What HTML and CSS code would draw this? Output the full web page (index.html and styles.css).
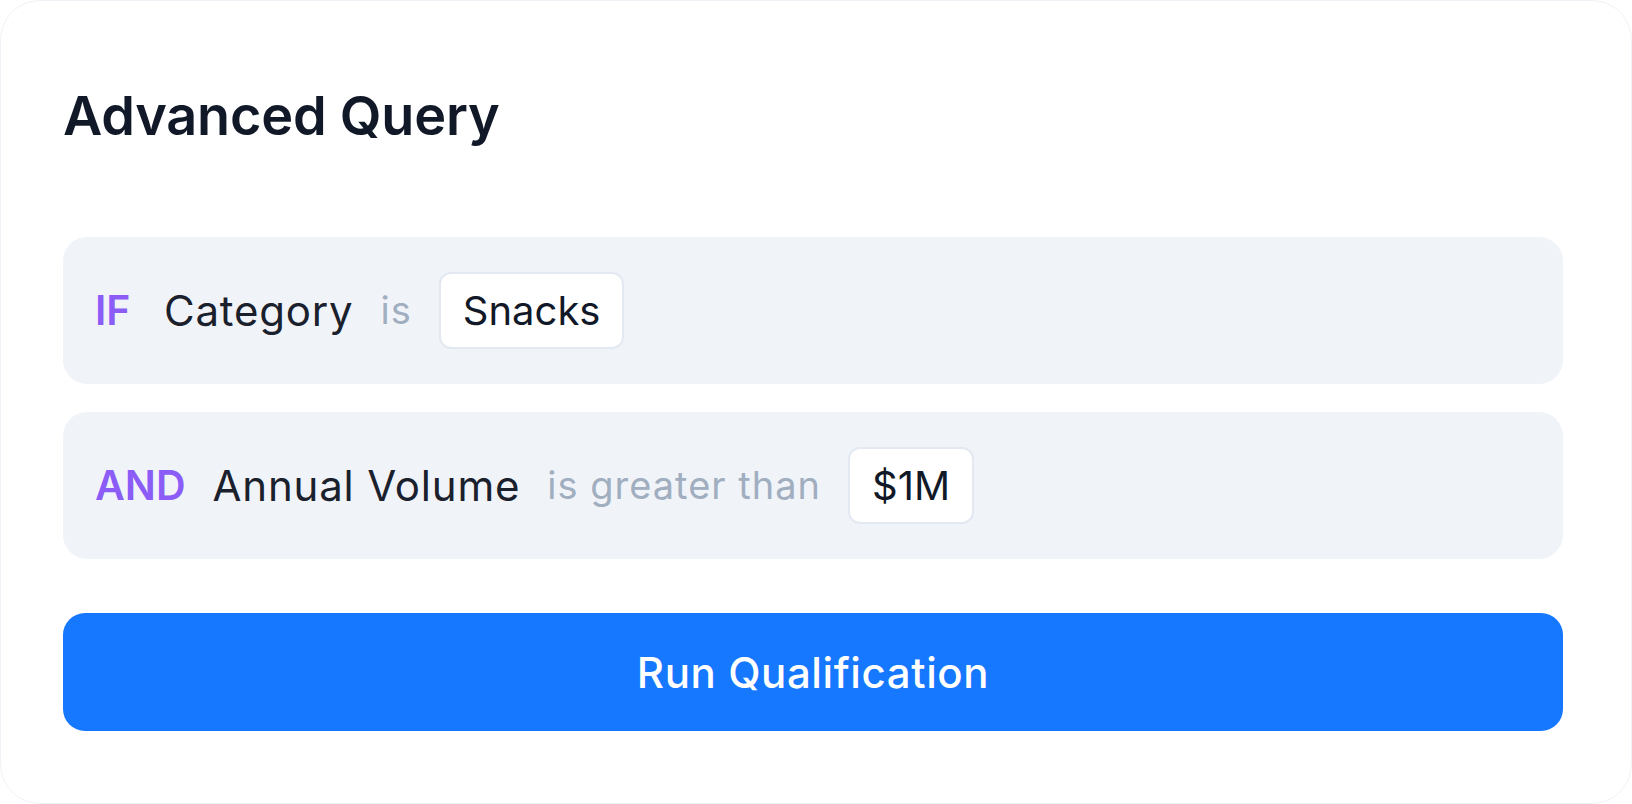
FILE: index.html
```html
<!DOCTYPE html>
<html lang="en">
<head>
<meta charset="utf-8">
<title>Advanced Query</title>
<link rel="stylesheet" href="styles.css">
</head>
<body>
<div class="card">
  <h1 class="title">Advanced Query</h1>
  <div class="rows">
    <div class="row">
      <span class="keyword">IF</span>
      <span class="field">Category</span>
      <span class="op">is</span>
      <span class="chip">Snacks</span>
    </div>
    <div class="row">
      <span class="keyword">AND</span>
      <span class="field">Annual Volume</span>
      <span class="op">is greater than</span>
      <span class="chip">$1M</span>
    </div>
  </div>
  <button class="run">Run Qualification</button>
</div>
</body>
</html>
```
FILE: styles.css
```css
html, body {
  margin: 0;
  padding: 0;
  background: #ffffff;
}

.card {
  box-sizing: border-box;
  width: 1632px;
  height: 804px;
  border: 1px solid #f1f2f7;
  border-radius: 40px;
  background: #ffffff;
  padding: 82px 68px 0 62px;
  font-family: Inter, "Noto Sans", sans-serif;
}

.title {
  margin: 0 0 88px 0;
  font-size: 54px;
  line-height: 66px;
  font-weight: 600;
  letter-spacing: -0.2px;
  color: #111827;
}

.rows {
  display: flex;
  flex-direction: column;
  gap: 28px;
}

.row {
  display: flex;
  align-items: center;
  gap: 27px;
  padding: 35px 32px;
  border-radius: 24px;
  background: #f0f4f9;
  font-size: 42px;
  line-height: 51px;
}

.keyword {
  min-width: 42px;
  font-size: 41px;
  font-weight: 600;
  color: #8b5cf6;
}

.field {
  color: #1a202c;
  letter-spacing: 0.8px;
}

.op {
  font-size: 38px;
  letter-spacing: 1px;
  color: #a0aec0;
}

.chip {
  padding: 11px 22px;
  border: 2px solid #e3e8f1;
  border-radius: 12px;
  background: #ffffff;
  color: #111827;
  font-size: 40px;
}

.run {
  display: block;
  width: 100%;
  height: 118px;
  margin-top: 54px;
  border: none;
  border-radius: 22px;
  background: #1677ff;
  color: #ffffff;
  font-family: Inter, "Noto Sans", sans-serif;
  font-size: 42px;
  font-weight: 500;
  letter-spacing: 0.6px;
}
```
